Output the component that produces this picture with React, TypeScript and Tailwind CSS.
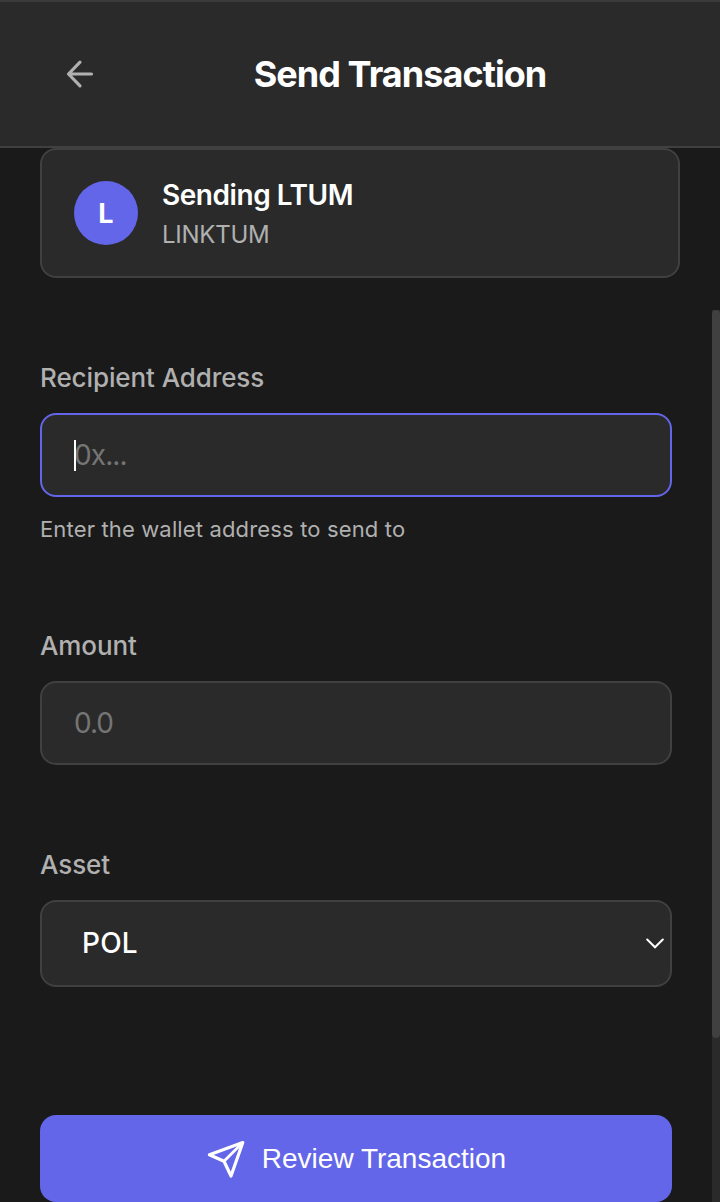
import type { ReactNode } from "react";

function Field({ label, children }: { label: string; children: ReactNode }) {
  return (
    <div className="flex flex-col">
      <label className="mb-[17px] h-9 font-['Inter',sans-serif] text-[26px] leading-9 font-medium tracking-[-0.1px] text-[#b0b0b0]">
        <span className="whitespace-nowrap">{label}</span>
      </label>
      {children}
    </div>
  );
}

export default function App() {
  return (
    <div className="flex h-[1202px] w-[720px] flex-col overflow-hidden bg-[#1a1a1a] font-['Inter',sans-serif] text-white">
      <header className="flex h-[148px] shrink-0 items-center border-b-2 border-[#404040] bg-[#2a2a2a] pt-0.5 shadow-[inset_0_2px_0_#3b3b3b]">
        <button className="flex w-40 items-center justify-center" aria-label="Back">
          <svg width="40" height="40" viewBox="0 0 40 40" fill="none" stroke="#b0b0b0" strokeWidth="3.2" strokeLinecap="round" strokeLinejoin="round">
            <path d="M31.5 20H8.5M20 8.2L8.5 20L20 31.8" />
          </svg>
        </button>
        <h1 className="flex-1 text-center text-[36px] leading-[44px] font-bold tracking-[-0.95px]">
          <span>Send Transaction</span>
        </h1>
        <div className="w-20" />
      </header>

      <div className="flex min-h-0 flex-1">
        <main className="flex w-[712px] flex-col pl-10">
          <section className="flex h-[130px] w-[640px] shrink-0 items-center gap-6 rounded-2xl border-2 border-[#404040] bg-[#2a2a2a] px-8">
            <div className="flex size-16 items-center justify-center rounded-full bg-[#6366e8] pt-0.5 text-[27px] font-bold">L</div>
            <div className="flex flex-col pt-1">
              <span className="text-[28px] leading-10 font-semibold tracking-[-0.45px] whitespace-nowrap">Sending LTUM</span>
              <span className="text-[24px] leading-10 tracking-[-0.25px] whitespace-nowrap text-[#b0b0b0]">LINKTUM</span>
            </div>
          </section>

          <div className="flex w-[632px] flex-col pt-[82px]">
            <Field label="Recipient Address">
              <div className="flex h-[84px] items-center rounded-2xl border-2 border-[#6366e8] bg-[#2a2a2a] px-8">
                <div className="relative text-[28px] leading-8 tracking-[-0.9px] text-[#757575]">
                  <span>0x...</span>
                  <div className="absolute top-px left-0 h-[31px] w-0.5 bg-white" />
                </div>
              </div>
              <p className="mt-4 h-8 text-[22px] leading-8 tracking-[0.15px] whitespace-nowrap text-[#b0b0b0]">
                <span>Enter the wallet address to send to</span>
              </p>
            </Field>

            <div className="pt-[83px]">
              <Field label="Amount">
                <div className="flex h-[84px] items-center rounded-2xl border-2 border-[#404040] bg-[#2a2a2a] px-8 text-[28px] tracking-[-1px] text-[#757575]">
                  <span>0.0</span>
                </div>
              </Field>
            </div>

            <div className="pt-[82px]">
              <Field label="Asset">
                <div className="flex h-[87px] items-center justify-between rounded-2xl border-2 border-[#404040] bg-[#2a2a2a] pr-1.5 pl-10 text-[28px] font-medium">
                  <span className="pb-0.5 tracking-[0.2px]">POL</span>
                  <svg width="18" height="12" viewBox="0 0 18 12" fill="none" stroke="white" strokeWidth="2" strokeLinecap="round">
                    <path d="M1.2 1.5L9 9.3L16.8 1.5" />
                  </svg>
                </div>
              </Field>
            </div>

            <button className="mt-32 flex h-[87px] items-center justify-center gap-4 rounded-2xl bg-[#6366e8] font-['Liberation_Sans',sans-serif] text-[28px]">
              <svg width="40" height="40" viewBox="0 0 40 40" fill="none" stroke="white" strokeWidth="3.2" strokeLinejoin="round">
                <path d="M36.8 3.5L3.4 15.8L18 22.3L25 37Z" />
                <path d="M36.8 3.5L18 22.3" strokeWidth="2.8" />
              </svg>
              <span className="whitespace-nowrap">Review Transaction</span>
            </button>
          </div>
        </main>
        <div className="flex w-2 flex-col pt-[162px]">
          <div className="flex-1 bg-[#2a2a2a]">
            <div className="h-[728px] rounded-full bg-[#404040]" />
          </div>
        </div>
      </div>
    </div>
  );
}
